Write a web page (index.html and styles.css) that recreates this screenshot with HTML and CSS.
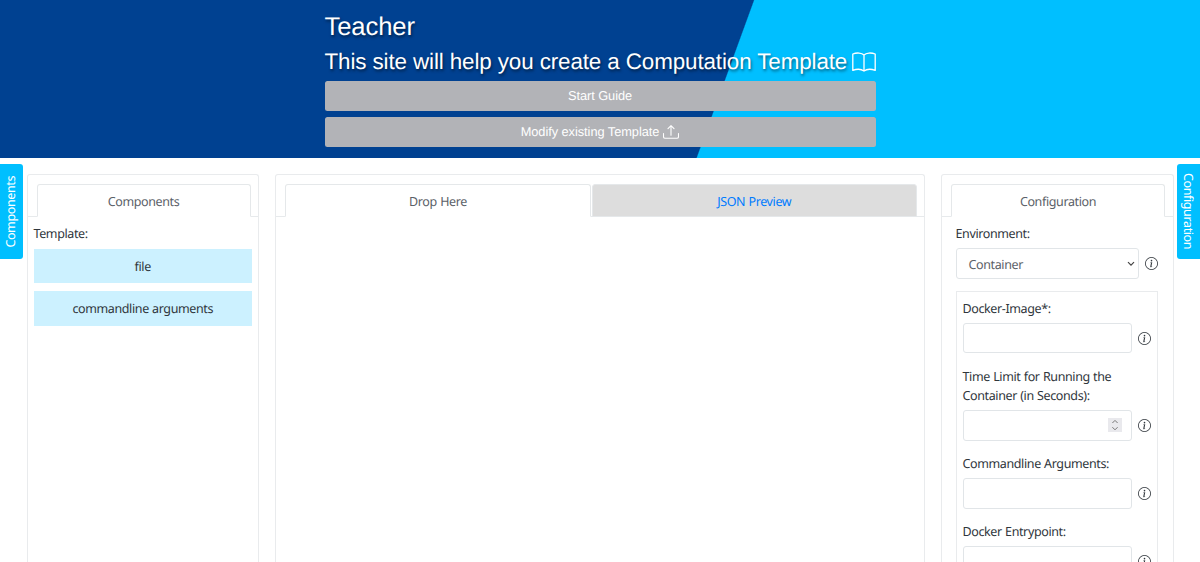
FILE: index.html
```html
<!DOCTYPE html>
<html lang="en">
<head>
<meta charset="utf-8">
<title>Teacher</title>
<link rel="stylesheet" href="styles.css">
</head>
<body>
<svg class="defs" aria-hidden="true">
  <symbol id="info" viewBox="0 0 16 16">
    <path d="M8 15A7 7 0 1 1 8 1a7 7 0 0 1 0 14zm0 1A8 8 0 1 0 8 0a8 8 0 0 0 0 16z"/>
    <path d="m8.93 6.588-2.29.287-.082.38.45.083c.294.07.352.176.288.469l-.738 3.468c-.194.897.105 1.319.808 1.319.545 0 1.178-.252 1.465-.598l.088-.416c-.2.176-.492.246-.686.246-.275 0-.375-.193-.304-.533L8.93 6.588zM9 4.5a1 1 0 1 1-2 0 1 1 0 0 1 2 0z"/>
  </symbol>
</svg>
<header class="hero">
  <div class="hero-content">
    <h1 class="title">Teacher</h1>
    <h2 class="subtitle"><span>This site will help you create a Computation Template</span>
      <svg class="book" viewBox="0 0 24 20"><path d="M12 3C9.800.7 4.700.4.800 2v16.400c3.900-1.500 8.600-1.300 11.200.6 2.600-1.900 7.300-2.100 11.200-.6V2C19.300.4 14.200.7 12 3v16"/></svg>
    </h2>
    <button class="hero-button">Start Guide</button>
    <button class="hero-button">Modify existing Template
      <svg class="upload" viewBox="0 0 16 14"><path d="M.5 8.500V11.700a1.600 1.600 0 0 0 1.600 1.600h11.800a1.600 1.600 0 0 0 1.600-1.600V8.500M8 10.200V.8M5 3.700l3-3 3 3"/></svg>
    </button>
  </div>
</header>
<div class="side-tab side-left"><span>Components</span></div>
<div class="side-tab side-right"><span>Configuration</span></div>
<main class="columns">
  <section class="panel">
    <nav class="tabs"><a class="tab active">Components</a></nav>
    <div class="panel-body">
      <p class="label">Template:</p>
      <div class="item">file</div>
      <div class="item">commandline arguments</div>
    </div>
  </section>
  <section class="panel">
    <nav class="tabs"><a class="tab active tab-drop">Drop Here</a><a class="tab tab-json">JSON Preview</a></nav>
  </section>
  <section class="panel">
    <nav class="tabs"><a class="tab active">Configuration</a></nav>
    <div class="config">
      <p class="label">Environment:</p>
      <div class="row">
        <div class="field select"><span>Container</span><svg class="chevron" viewBox="0 0 8 6"><path d="m1 1.200 3 3 3-3"/></svg></div>
        <svg class="info"><use href="#info"/></svg>
      </div>
      <div class="group">
        <p class="label">Docker-Image*:</p>
        <div class="row"><div class="field"></div><svg class="info"><use href="#info"/></svg></div>
        <p class="label">Time Limit for Running the<br>Container (in Seconds):</p>
        <div class="row"><div class="field number"><svg class="spinner" viewBox="0 0 14 14"><path d="m4.400 5 2.600-2.600L9.600 5M4.400 9.200 7 11.800l2.600-2.600"/></svg></div><svg class="info"><use href="#info"/></svg></div>
        <p class="label">Commandline Arguments:</p>
        <div class="row"><div class="field"></div><svg class="info"><use href="#info"/></svg></div>
        <p class="label">Docker Entrypoint:</p>
        <div class="row"><div class="field"></div><svg class="info"><use href="#info"/></svg></div>
      </div>
    </div>
  </section>
</main>
</body>
</html>
```
FILE: styles.css
```css
* { box-sizing: border-box; }
body {
  margin: 0;
  height: 562px;
  overflow: hidden;
  display: flex;
  flex-direction: column;
  background: #fff;
  color: #30363c;
  font: 12.500px/19.200px "Noto Sans", sans-serif;
  letter-spacing: -0.380px;
  word-spacing: 0.400px;
  text-rendering: geometricPrecision;
}
h1, h2, p { margin: 0; font-weight: 400; }
.defs { position: absolute; width: 0; height: 0; }
.hero {
  flex: none;
  height: 158px;
  padding: 11px 0 0 324.500px;
  background: linear-gradient(110deg, #004191 0 59.920%, #00bfff 60.020%);
  color: #fff;
  font-family: "Liberation Sans", Arial, sans-serif;
  letter-spacing: 0;
  word-spacing: 0;
}
.hero-content { width: 551px; display: flex; flex-direction: column; }
.title { padding-top: 1px; font-size: 25.600px; line-height: 31px; letter-spacing: -0.100px; text-shadow: 1px 2px 3px rgba(0, 0, 0, .5); }
.subtitle {
  display: flex;
  align-items: center;
  justify-content: space-between;
  margin-top: 4px;
  height: 30px;
  font-size: 22.400px;
  letter-spacing: -0.110px;
  white-space: nowrap;
  text-shadow: 1px 2px 3px rgba(0, 0, 0, .5);
}
.book { width: 24px; height: 20px; fill: none; stroke: #fff; stroke-width: 1.300; stroke-linejoin: round; }
.hero-button {
  display: flex;
  align-items: center;
  justify-content: center;
  gap: 4px;
  height: 30px;
  margin: 4px 0 0;
  padding: 0 0 1px;
  border: 0;
  border-radius: 2.500px;
  background: #b2b3b7;
  color: #fff;
  font: 12.800px "Liberation Sans", Arial, sans-serif;
  letter-spacing: -0.050px;
  text-rendering: geometricPrecision;
}
.hero-button + .hero-button { margin-top: 6px; }
.upload { width: 16px; height: 14px; fill: none; stroke: #fff; stroke-width: 1.100; stroke-linecap: round; stroke-linejoin: round; }
.side-tab {
  position: absolute;
  top: 164px;
  width: 23px;
  height: 95px;
  display: flex;
  align-items: center;
  justify-content: center;
  background: #00bfff;
  color: #fff;
  writing-mode: vertical-rl;
}
.side-left { left: 0; padding-right: 2px; border-radius: 0 3px 3px 0; }
.side-left span { transform: rotate(180deg); }
.side-right { right: 0; border-radius: 3px 0 0 3px; }
.columns {
  flex: 1;
  min-height: 0;
  display: grid;
  grid-template-columns: 232.500px 650px 232.500px;
  gap: 16px;
  padding: 16px 26.500px 0;
}
.panel { border: 1px solid #e9ebed; border-bottom: 0; border-radius: 3px 3px 0 0; min-width: 0; min-height: 0; overflow: hidden; }
.tabs { display: flex; gap: 1px; padding: 9px 7.500px 0 9px; border-bottom: 1px solid #e7eaec; }
.tab {
  flex: 1;
  height: 33px;
  margin-bottom: -1px;
  padding-top: 7px;
  border: 1px solid #e5e8ea;
  border-radius: 3px 3px 0 0;
  text-align: center;
  color: #007bff;
  background: #ddd;
}
.tab.active { color: #5b6168; background: #fff; border-bottom-color: #fff; }
.tab-drop { flex: 0 0 306px; }
.panel-body { padding: 7px 6px 0; }
.item {
  height: 34.500px;
  margin: 5.500px 0 8px;
  line-height: 36px;
  text-align: center;
  background: #ccf1ff;
}
.item + .item { margin-top: 8px; }
.config { padding: 7px 14.500px 0 13.500px; }
.row { display: flex; align-items: center; gap: 6px; margin-top: 5px; }
.field { flex: 1; height: 30.500px; border: 1px solid #e1e5e8; border-radius: 3px; }
.info { flex: none; width: 13px; height: 13px; fill: #30363c; }
.select { display: flex; align-items: center; justify-content: space-between; padding: 2px 3px 0 12px; color: #5b6168; }
.chevron { width: 8px; height: 6px; fill: none; stroke: #444; stroke-width: 1.200; }
.number { display: flex; align-items: center; justify-content: flex-end; padding-right: 9px; }
.spinner { width: 14px; height: 14px; background: #e9e9ed; fill: none; stroke: #777; stroke-width: 1; }
.group { margin-top: 12px; padding: 7px 6px 0; border: 1px solid #e9ebed; border-bottom: 0; }
.group .row + .label { margin-top: 13.300px; }
```
